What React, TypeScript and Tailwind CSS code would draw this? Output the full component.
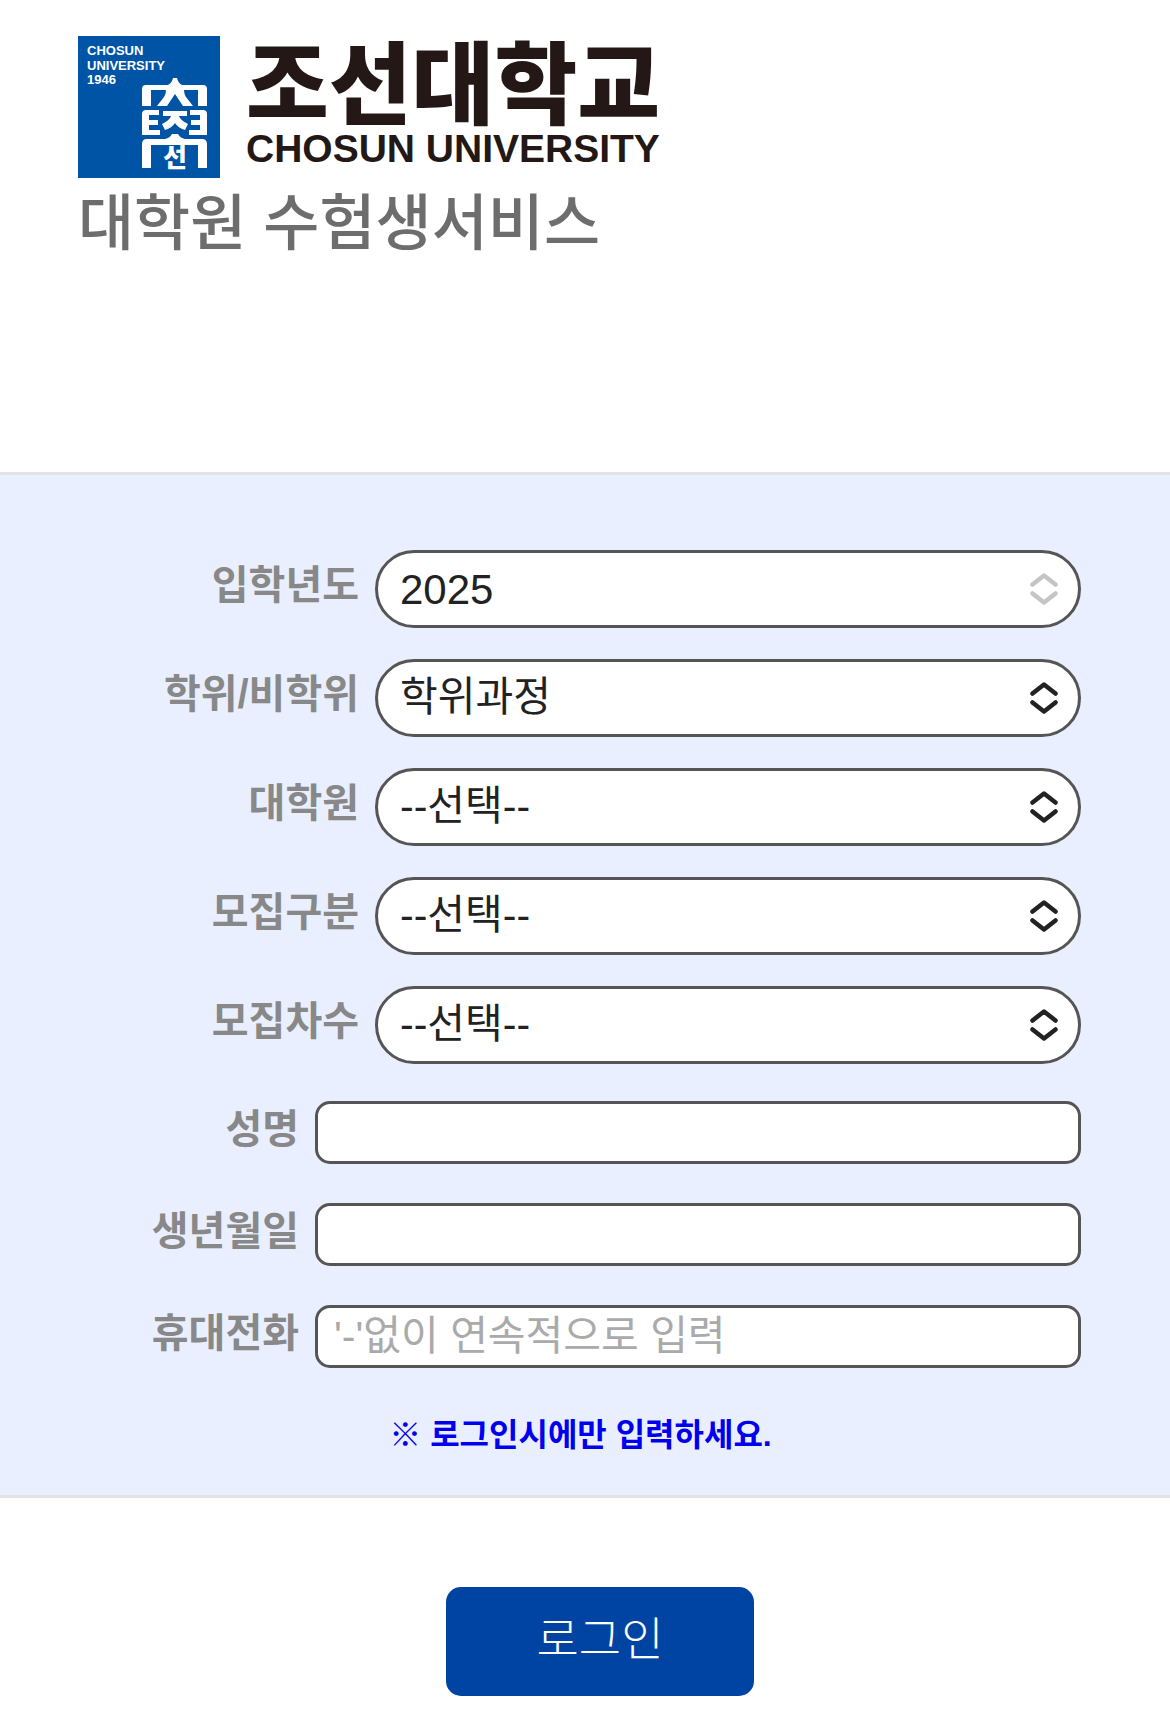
import { useState } from "react";
import type { ReactNode } from "react";

const years = ["2025"];
const degrees = ["학위과정", "비학위과정"];
const placeholderOption = ["--선택--"];

function Emblem() {
  return (
    <svg viewBox="0 0 142 142" className="h-[142px] w-[142px] shrink-0" aria-label="Chosun University 1946">
      <rect width="142" height="142" fill="#0054a6" />
      <g fill="#fff" fontFamily="'Liberation Sans', Arial, sans-serif" fontSize="13" fontWeight="700">
        <text x="9" y="19">CHOSUN</text>
        <text x="9" y="34">UNIVERSITY</text>
        <text x="9" y="48">1946</text>
      </g>
      <g fill="#fff">
        <path d="M64 70V53q0-4 4-4h22q4-2 5-7h4q1 5 5 7h21q4 0 4 4v17h-9V54h-14q0 4 2 7l7 9h-10l-8-12-8 12H79l7-9q2-3 2-7H73v16z" />
        <path d="M64 78q0-4 4-4h13v5H71v5h9v5h-9v5h11v5H64z" />
        <path d="M129 78q0-4-4-4h-13v5h10v5h-9v5h9v5h-11v5h18z" />
        <path d="M85 75h24v5h-8q1 4 9 8l-3 6q-7-2-10-7-3 5-10 7l-3-6q8-4 9-8h-8z" />
        <path d="M64 132v-24q0-5 5-5h18q5-1 7-5h6q2 4 7 5h17q5 0 5 5v24h-9v-23H73v23z" />
      </g>
      <text
        x="97"
        y="131"
        textAnchor="middle"
        fill="#fff"
        fontFamily="'Noto Sans CJK KR', sans-serif"
        fontSize="26"
        fontWeight="900"
      >
        선
      </text>
    </svg>
  );
}

function Chevrons() {
  return (
    <svg
      viewBox="0 0 28 32"
      className="pointer-events-none absolute top-1/2 right-[23px] h-8 w-7 -translate-y-1/2"
      fill="none"
      stroke="currentColor"
      strokeWidth="4.5"
      strokeLinecap="round"
      strokeLinejoin="round"
    >
      <path d="M2.500 11.500L14 2.500l11.500 9M2.500 20.500L14 29.500l11.500-9" />
    </svg>
  );
}

function SelectRow({
  id,
  label,
  options,
  disabled = false,
}: {
  id: string;
  label: string;
  options: string[];
  disabled?: boolean;
}) {
  return (
    <div className="flex items-center gap-4">
      <label htmlFor={id} className="w-[359px] shrink-0 pb-2 text-right text-[40px] leading-[48px] font-bold text-[#888]">
        {label}
      </label>
      <div className={`relative flex-1 ${disabled ? "text-[#c5c5c7]" : "text-[#222]"}`}>
        <select
          id={id}
          disabled={disabled}
          className={`block h-[78px] w-full appearance-none rounded-full border-3 border-[#555] bg-white pr-16 pl-[22px] text-[#222] opacity-100 ${
            disabled ? "text-[42px]" : "text-[41px]"
          }`}
        >
          {options.map((o) => (
            <option key={o}>{o}</option>
          ))}
        </select>
        <Chevrons />
      </div>
    </div>
  );
}

function InputRow({ id, label, children }: { id: string; label: string; children: ReactNode }) {
  return (
    <div className="flex items-center gap-4">
      <label htmlFor={id} className="w-[299px] shrink-0 pb-2 text-right text-[40px] leading-[48px] font-bold text-[#888]">
        {label}
      </label>
      {children}
    </div>
  );
}

const inputClass =
  "h-[63px] min-w-0 flex-1 rounded-[15px] border-3 border-[#555] bg-white px-4 text-[41px] text-[#222] placeholder:text-[#aaa]";

export default function App() {
  const [name, setName] = useState("");
  const [birth, setBirth] = useState("");
  const [phone, setPhone] = useState("");

  return (
    <form
      className="bg-white font-['Liberation_Sans','Noto_Sans_CJK_KR',sans-serif]"
      onSubmit={(e) => e.preventDefault()}
    >
      <header className="px-[78px] pt-9 pb-[202px]">
        <div className="flex gap-[26px]">
          <Emblem />
          <div className="whitespace-nowrap text-[#231815]">
            <h1 className="text-[90px] leading-[100px] font-black">조선대학교</h1>
            <p className="text-[39px] leading-[26px] font-bold">CHOSUN UNIVERSITY</p>
          </div>
        </div>
        <h2 className="text-[61px] leading-[92px] font-medium text-[#6d6d6d]">대학원 수험생서비스</h2>
      </header>

      <section className="border-y-3 border-[#e3e3e6] bg-[#e9efff] pt-[75px] pr-[89px] pb-9">
        <div className="flex flex-col gap-[31px]">
          <SelectRow id="year" label="입학년도" options={years} disabled />
          <SelectRow id="degree" label="학위/비학위" options={degrees} />
          <SelectRow id="school" label="대학원" options={placeholderOption} />
          <SelectRow id="type" label="모집구분" options={placeholderOption} />
          <SelectRow id="round" label="모집차수" options={placeholderOption} />
        </div>
        <div className="mt-[37px] flex flex-col gap-[39px]">
          <InputRow id="name" label="성명">
            <input id="name" className={inputClass} value={name} onChange={(e) => setName(e.target.value)} />
          </InputRow>
          <InputRow id="birth" label="생년월일">
            <input id="birth" className={inputClass} value={birth} onChange={(e) => setBirth(e.target.value)} />
          </InputRow>
          <InputRow id="phone" label="휴대전화">
            <input
              id="phone"
              type="tel"
              className={inputClass}
              placeholder="'-'없이 연속적으로 입력"
              value={phone}
              onChange={(e) => setPhone(e.target.value)}
            />
          </InputRow>
        </div>
        <p className="mt-[43px] pl-20 text-center text-[32px] leading-[48px] font-bold text-[#00e]">
          ※ 로그인시에만 입력하세요.
        </p>
      </section>

      <div className="flex justify-center pt-[89px] pb-10 pl-[30px]">
        <button
          type="submit"
          className="h-[109px] w-[308px] rounded-[15px] bg-[#0044a3] pb-1 text-[46px] font-light text-white"
        >
          로그인
        </button>
      </div>
    </form>
  );
}
